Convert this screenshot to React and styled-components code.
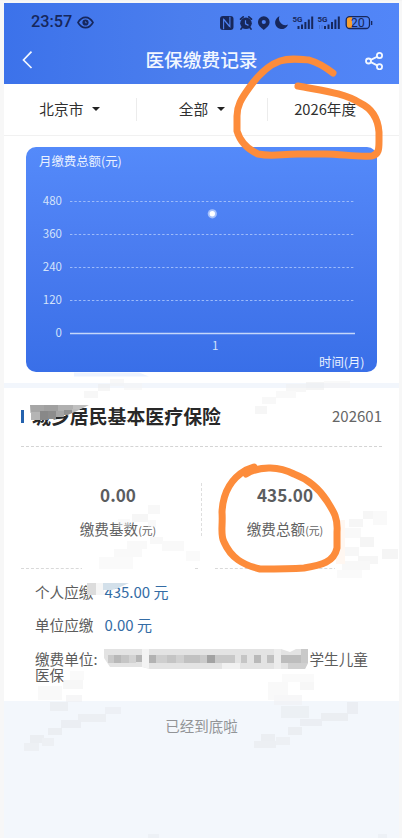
import React from 'react'
import styled, { createGlobalStyle } from 'styled-components'

const GlobalStyle = createGlobalStyle`
  * { box-sizing: border-box; }
  body {
    margin: 0;
    background: #f7f7f7;
    font-family: "Noto Sans CJK SC", "Noto Sans", sans-serif;
    overflow: hidden;
  }
`

const ticks = [480, 360, 240, 120, 0]

// [x, y, width, height, color]
const nameMask = [
  [30, 405, 14, 8, '#a6a6a6'], [44, 405, 14, 8, '#a0a0a0'], [58, 405, 15, 6, '#b0b0b0'], [73, 405, 16, 4, '#c0c0c0'],
  [31, 412, 9, 8, '#b5b5b5'], [40, 411, 8, 9, '#888888'], [48, 411, 8, 8, '#8c8c8c'], [56, 411, 8, 6, '#a5a5a5'], [64, 410, 8, 5, '#909090'], [72, 409, 8, 4, '#bbbbbb'],
]

const payerMask = [
  [104, 649, 204, 20, '#e3e3e3'],
  [108, 655, 6, 8, '#c9c9c9'], [114, 655, 7, 8, '#b8b8b8'], [121, 655, 8, 8, '#c5c5c5'], [129, 655, 7, 8, '#d2d2d2'], [136, 655, 6, 7, '#b5b5b5'],
  [142, 649, 7, 20, '#f3f3f3'], [149, 655, 7, 8, '#b2b2b2'], [156, 655, 11, 8, '#cecece'], [167, 655, 9, 8, '#c4c4c4'], [176, 655, 8, 8, '#d0d0d0'],
  [184, 655, 16, 8, '#c1c1c1'], [200, 655, 7, 8, '#cacaca'], [207, 655, 8, 8, '#a2a2a2'], [215, 655, 20, 8, '#c8c8c8'],
  [222, 663, 18, 6, '#f1f1f1'], [241, 655, 6, 8, '#c5c5c5'], [254, 655, 7, 8, '#b9b9b9'], [267, 655, 7, 8, '#c0c0c0'],
  [274, 649, 7, 20, '#ececec'], [281, 655, 20, 8, '#bdbdbd'], [288, 663, 20, 6, '#d0d0d0'], [301, 649, 7, 14, '#c9c9c9'],
]

const smudges = [
  [98, 384, 12, 7, '#eeeeee'], [110, 379, 14, 7, '#f3f3f3'], [84, 391, 14, 7, '#f1f1f1'], [124, 383, 18, 7, '#f5f5f5'],
  [286, 384, 20, 8, '#f1f1f1'], [306, 382, 18, 8, '#ededed'], [324, 381, 26, 7, '#f4f4f4'], [262, 397, 14, 7, '#f3f3f3'], [255, 406, 12, 8, '#efefef'], [276, 391, 20, 7, '#f5f5f5'],
  [148, 505, 12, 9, '#f3f3f3'], [132, 514, 16, 8, '#eeeeee'], [118, 519, 12, 8, '#f6f6f6'], [148, 520, 8, 7, '#f4f4f4'],
  [150, 537, 13, 7, '#f2f2f2'], [127, 541, 20, 8, '#f4f4f4'], [114, 549, 28, 8, '#f5f5f5'], [99, 557, 34, 12, '#f7f7f7'], [162, 541, 22, 10, '#f4f4f4'], [186, 551, 14, 10, '#f7f7f7'],
  [363, 511, 10, 8, '#eeeeee'], [373, 511, 14, 14, '#f5f5f5'], [349, 519, 14, 8, '#eeeeee'], [341, 528, 20, 10, '#f4f4f4'], [360, 537, 14, 10, '#ededed'], [345, 547, 14, 9, '#f0f0f0'],
  [382, 549, 16, 10, '#ededed'], [358, 556, 20, 8, '#eeeeee'], [342, 561, 28, 9, '#f3f3f3'], [337, 570, 25, 8, '#f6f6f6'], [336, 520, 9, 44, '#fff0e5'],
  [70, 671, 14, 9, '#f6f6f6'], [63, 680, 20, 9, '#f1f1f1'], [38, 686, 24, 14, '#f5f5f5'], [66, 695, 16, 7, '#eeeff1'], [50, 702, 18, 9, '#e7e9ec'],
  [105, 707, 16, 7, '#e8ebef'], [78, 714, 28, 8, '#e6e8ec'], [61, 720, 20, 8, '#e5e7eb'], [48, 728, 14, 7, '#e5e7ea'], [30, 735, 14, 8, '#e5e7ea'], [24, 743, 15, 8, '#e9ebee'], [42, 738, 12, 8, '#e8eaed'],
  [282, 674, 32, 8, '#f6f6f6'], [268, 682, 20, 18, '#f4f4f4'], [300, 682, 14, 8, '#f1f1f1'], [274, 695, 28, 10, '#f0f1f3'], [281, 706, 28, 12, '#e7eaed'],
  [347, 702, 11, 12, '#e5e7eb'], [321, 713, 27, 8, '#e4e6ea'], [300, 719, 22, 7, '#e5e7eb'], [288, 727, 14, 8, '#e5e7ea'], [261, 734, 14, 7, '#e4e6e9'], [254, 741, 22, 7, '#e7e9ec'], [276, 737, 14, 8, '#e9ebee'],
  [148, 834, 11, 4, '#e8ebef'], [378, 834, 9, 4, '#e8ebef'],
]

function EyeIcon () {
  return (
    <svg width='17' height='13' viewBox='0 0 17 13' fill='none' stroke='#16275c' strokeWidth='1.6'>
      <path d='M1 6.5C3 3 5.5 1.4 8.5 1.4S14 3 16 6.5C14 10 11.5 11.6 8.5 11.6S3 10 1 6.5Z' />
      <circle cx='8.5' cy='6.5' r='3.1' fill='#16275c' stroke='none' />
      <path d='M8.4 5.2v1.6h1.5' stroke='#4b7cec' strokeWidth='.7' />
    </svg>
  )
}

function StatusIcons () {
  return (
    <svg width='154' height='20' viewBox='219 11 154 20' fill='#17275b'>
      {/* nfc */}
      <rect x='220' y='15' width='13.5' height='14' rx='3' />
      <path d='M223.6 28.2V18.4l6 7.2M229.9 15.8v9.8l-6-7.2' fill='none' stroke='#4f82f2' strokeWidth='1.1' />
      {/* alarm */}
      <circle cx='246' cy='22.3' r='5.8' />
      <path d='M240.5 18.2l2.7-2.4M251.5 18.2l-2.7-2.4M242 26.8l-1 1.2M250 26.8l1 1.2' stroke='#17275b' strokeWidth='1.7' strokeLinecap='round' />
      <path d='M245.5 19.3v3.6l3 1.5' fill='none' stroke='#4f82f2' strokeWidth='1.2' />
      {/* location */}
      <path fillRule='evenodd' d='M263.8 15.2a5.8 5.8 0 0 0-5.8 5.8c0 3.5 3 5.5 5.8 8 2.8-2.5 5.8-4.5 5.8-8a5.8 5.8 0 0 0-5.8-5.8Zm0 3.7a2.1 2.1 0 1 1 0 4.2 2.1 2.1 0 0 1 0-4.2Z' />
      {/* moon */}
      <path d='M279.5 15.3a6.6 6.6 0 1 0 8.5 8.3 6.4 6.4 0 0 1-8.5-8.3Z' />
      <Net x='292.5' y='20.6'>5G</Net>
      <path d='M297.5 25h2v3h-2zM301 23.5h2V28h-2zM304.4 21h2v7h-2zM307.8 18.5h2V28h-2zM311.2 15.5h2V28h-2z' />
      <Net x='317.5' y='20.6'>5G</Net>
      <path d='M324 25h2v3h-2zM327.5 23.5h2V28h-2zM331 21h2v7h-2zM334.4 18.5h2V28h-2zM337.8 15.5h2V28h-2z' />
      <path d='M319.5 24v4M322 24v4' stroke='#3f66bd' strokeWidth='.7' />
      {/* battery */}
      <path d='M349.5 15.5H352v12h-2.5a3 3 0 0 1-3-3v-6a3 3 0 0 1 3-3Z' fill='#f7a02d' />
      <rect x='346.2' y='15.7' width='23.3' height='11.8' rx='3.5' fill='none' stroke='#17275b' strokeWidth='1.3' />
      <path d='M371 20h1.3v4H371z' />
      <BatteryText x='357.8' y='26'>20</BatteryText>
    </svg>
  )
}

function ShareIcon () {
  return (
    <svg width='20' height='20' viewBox='0 0 20 20' fill='none' stroke='#f2f7ff' strokeWidth='1.8'>
      <circle cx='4.5' cy='11' r='2.5' />
      <circle cx='15.5' cy='5.5' r='2.6' />
      <circle cx='15.5' cy='16.7' r='2.6' />
      <path d='M6.8 9.9l6.3-3.2M6.8 12.1l6.3 3.3' />
    </svg>
  )
}

function Chart () {
  return (
    <svg width='351' height='225' viewBox='26 147 351 225'>
      <ChartTitle x='39' y='165.5'>月缴费总额(元)</ChartTitle>
      {ticks.map((tick, i) => {
        const y = 201.5 + i * 33
        return (
          <g key={tick}>
            <TickText x='62' y={y + 3.5}>{tick}</TickText>
            {tick === 0
              ? <line x1='70' x2='355' y1={y} y2={y} stroke='#c5d7fa' strokeWidth='1.3' />
              : <line x1='70' x2='354' y1={y} y2={y} stroke='#9dbbfa' strokeWidth='1' strokeDasharray='2.4 1.99' />}
          </g>
        )
      })}
      <circle cx='212.3' cy='213.8' r='4.6' fill='#a5c0fb' />
      <circle cx='212.3' cy='213.8' r='2.7' fill='#fff' />
      <TickText x='218.3' y='350'>1</TickText>
      <ChartTitle x='319' y='367'>时间(月)</ChartTitle>
    </svg>
  )
}

function Blocks ({ items }) {
  return items.map(([x, y, w, h, color]) => (
    <rect key={`${x}-${y}`} x={x} y={y} width={w} height={h} fill={color} />
  ))
}

function Marks () {
  return (
    <Overlay width='402' height='838' viewBox='0 0 402 838' fill='none'>
      <path d='M74 372.5h65l10 4H74z' fill='#edf3fe' />
      <path d='M82 566h112v5H82zM199 566h16v5h-16zM335 566h48v5h-48z' fill='#fff' />
      <g opacity='.5'><Blocks items={smudges} /></g>
      <clipPath id='name'><path d='M30 405h59l-12 6-14 6-10 3H31z' /></clipPath>
      <g clipPath='url(#name)'><Blocks items={nameMask} /></g>
      <clipPath id='payer'><path d='M104 649h177l9 3 6-3h12v14l-3 6H150l-8-2h-32l-6-9z' /></clipPath>
      <g clipPath='url(#payer)'><Blocks items={payerMask} /></g>
      <path d='M87 583h9v12h-9z' fill='#dcdcdc' />
      <path d='M96 583h8v12h-8z' fill='#f6f6f6' />
      <path d='M103 583h26l-11 5-6 2h-9z' fill='#d3e0ea' />
      <g stroke='#fd8c3b' strokeWidth='7' strokeLinecap='round' strokeLinejoin='round'>
        <path d='M333 73C324 66 316 62 309 60C298 59 289 58 280 61C266 66 256 78 249 88C241 99 237 106 237 116V131C240 141 247 149 258 154C273 157 280 154 298 154H325C342 154 355 157 372 156C379 154 379 149 379 141V132C378 119 373 109 360 103C344 93 324 91 298 86' />
        <path d='M246 474C261 465 280 467 294 474C310 480 320 490 327 501C334 512 338 518 337 532V548C334 562 322 565 304 568C290 569 275 569 260 569C243 565 231 558 224 542C220 535 223 526 222 512C223 492 232 478 246 470L254 467' />
      </g>
    </Overlay>
  )
}

function App () {
  return (
    <Page>
      <GlobalStyle />
      <Header>
        <StatusBar>
          <Clock>23:57</Clock>
          <EyeIcon />
          <Spacer />
          <StatusIcons />
        </StatusBar>
        <NavBar>
          <svg width='12' height='20' viewBox='0 0 12 20' fill='none' stroke='#f2f7ff' strokeWidth='1.7'>
            <path d='M9.5 1.7L1.5 10l8 8' />
          </svg>
          <NavTitle>医保缴费记录</NavTitle>
          <ShareIcon />
        </NavBar>
      </Header>
      <Filters>
        <Filter>北京市<Caret /></Filter>
        <Filter>全部<Caret /></Filter>
        <Filter>2026年度<Caret $faded /></Filter>
      </Filters>
      <ChartSection>
        <ChartCard><Chart /></ChartCard>
      </ChartSection>
      <Record>
        <RecordHead>
          <Accent />
          <RecordName>城乡居民基本医疗保险</RecordName>
          <Period>202601</Period>
        </RecordHead>
        <Stats>
          <Stat $padding='0 0 0 14px'>
            <Amount>0.00</Amount>
            <StatLabel>缴费基数<small>(元)</small></StatLabel>
          </Stat>
          <Stat $padding='0 14px 0 0'>
            <Amount>435.00</Amount>
            <StatLabel>缴费总额<small>(元)</small></StatLabel>
          </Stat>
        </Stats>
        <Details>
          <Row><span>个人应缴</span><Money>435.00 元</Money></Row>
          <Row><span>单位应缴</span><Money>0.00 元</Money></Row>
          <Payer>缴费单位:<Redacted />学生儿童医保</Payer>
        </Details>
      </Record>
      <Footer>已经到底啦</Footer>
      <Marks />
    </Page>
  )
}

const Page = styled.div`
  position: relative;
  width: 402px;
  height: 838px;
  padding: 2px 3px 0 4px;
  overflow: hidden;
  display: flex;
  flex-direction: column;
  border-top: 1px solid #f4f4f4;
`

const Header = styled.header`
  flex: none;
  height: 81px;
  background: linear-gradient(90deg, #3c72ea 0%, #4b7eee 45%, #5286f8 100%);
`

const StatusBar = styled.div`
  display: flex;
  align-items: center;
  height: 35px;
  padding: 3px 26px 0 27px;
`

const Clock = styled.span`
  width: 42px;
  font: 500 16.3px/20px Roboto, sans-serif;
  color: #16275c;
  margin-right: 4px;
`

const Spacer = styled.span`
  flex: 1;
`

const Net = styled.text`
  font: 700 8px Roboto, sans-serif;
`

const BatteryText = styled.text`
  font: 400 12.5px Roboto, sans-serif;
  text-anchor: middle;
`

const NavBar = styled.div`
  display: flex;
  align-items: center;
  justify-content: space-between;
  height: 44px;
  padding: 0 15px 0 18px;
`

const NavTitle = styled.h1`
  margin: 0 0 3px 5px;
  font-size: 18.7px;
  line-height: 28px;
  font-weight: 500;
  color: #f2f7ff;
`

const Filters = styled.div`
  flex: none;
  display: grid;
  grid-template-columns: repeat(3, 1fr);
  align-items: center;
  height: 52px;
  background: #fff;
  border-bottom: 1px solid #f1f1f1;
`

const Filter = styled.div`
  display: flex;
  align-items: center;
  justify-content: center;
  gap: 9px;
  height: 23px;
  padding-bottom: 2px;
  font-size: 14.7px;
  line-height: 20px;
  color: #303030;
  & + & { border-left: 1px solid #ececec; }
`

const Caret = styled.i`
  width: 8px;
  border: 4px solid transparent;
  border-top-color: ${p => p.$faded ? 'transparent' : '#222'};
  border-bottom: 0;
`

const ChartSection = styled.section`
  flex: none;
  height: 247px;
  padding: 11px 22px;
  background: #fff;
`

const ChartCard = styled.div`
  height: 225px;
  border-radius: 10px;
  overflow: hidden;
  background: linear-gradient(180deg, #548afa 0%, #4a7cf0 47%, #396fe8 100%);
  svg { display: block; }
`

const ChartTitle = styled.text`
  font-size: 12.4px;
  fill: #e9f1ff;
`

const TickText = styled.text`
  font-size: 11.5px;
  fill: #d3e2fb;
  text-anchor: end;
`

const Record = styled.section`
  flex: none;
  height: 313px;
  margin-top: 5px;
  padding: 0 17px;
  background: #fff;
  box-shadow: 0 -5px 0 #f2f6fc;
`

const RecordHead = styled.div`
  display: flex;
  align-items: center;
  height: 59px;
  padding-bottom: 2px;
  border-bottom: 1px dashed #d4d4d4;
`

const Accent = styled.i`
  width: 3px;
  height: 13px;
  margin-top: 1px;
  background: #2462ae;
`

const RecordName = styled.h2`
  flex: 1;
  margin: 0 0 0 8px;
  font-size: 18.9px;
  line-height: 28px;
  font-weight: 700;
  color: #282828;
`

const Period = styled.span`
  font-size: 15px;
  line-height: 22px;
  margin-bottom: 1px;
  color: #666;
`

const Stats = styled.div`
  display: grid;
  grid-template-columns: 180px 1fr;
  height: 122px;
  padding-top: 36px;
  border-bottom: 1px dashed #d9d9d9;
`

const Stat = styled.div`
  height: 53px;
  padding: ${p => p.$padding};
  text-align: center;
  & + & { border-left: 1px dashed #dedede; }
`

const Amount = styled.div`
  font-size: 17.1px;
  line-height: 24px;
  font-weight: 700;
  color: #5b5d5f;
`

const StatLabel = styled.div`
  margin-top: 11px;
  font-size: 14.6px;
  line-height: 22px;
  color: #626262;
  small { font-size: 10.8px; }
`

const Details = styled.div`
  padding: 7px 10px 0 14px;
  font-size: 14.6px;
  color: #5c5c5c;
`

const Row = styled.div`
  display: flex;
  gap: 11px;
  height: 33px;
  line-height: 32px;
`

const Money = styled.span`
  font-size: 15px;
  color: #346ca5;
`

const Payer = styled.p`
  margin: 0;
  padding-top: 9px;
  line-height: 16px;
`

const Redacted = styled.span`
  display: inline-block;
  width: 212px;
`

const Footer = styled.footer`
  flex: 1;
  padding-top: 14px;
  background: #f3f7fc;
  text-align: center;
  font-size: 14.5px;
  line-height: 22px;
  color: #929497;
`

const Overlay = styled.svg`
  position: absolute;
  left: 0;
  top: -1px;
  pointer-events: none;
`

export default App
